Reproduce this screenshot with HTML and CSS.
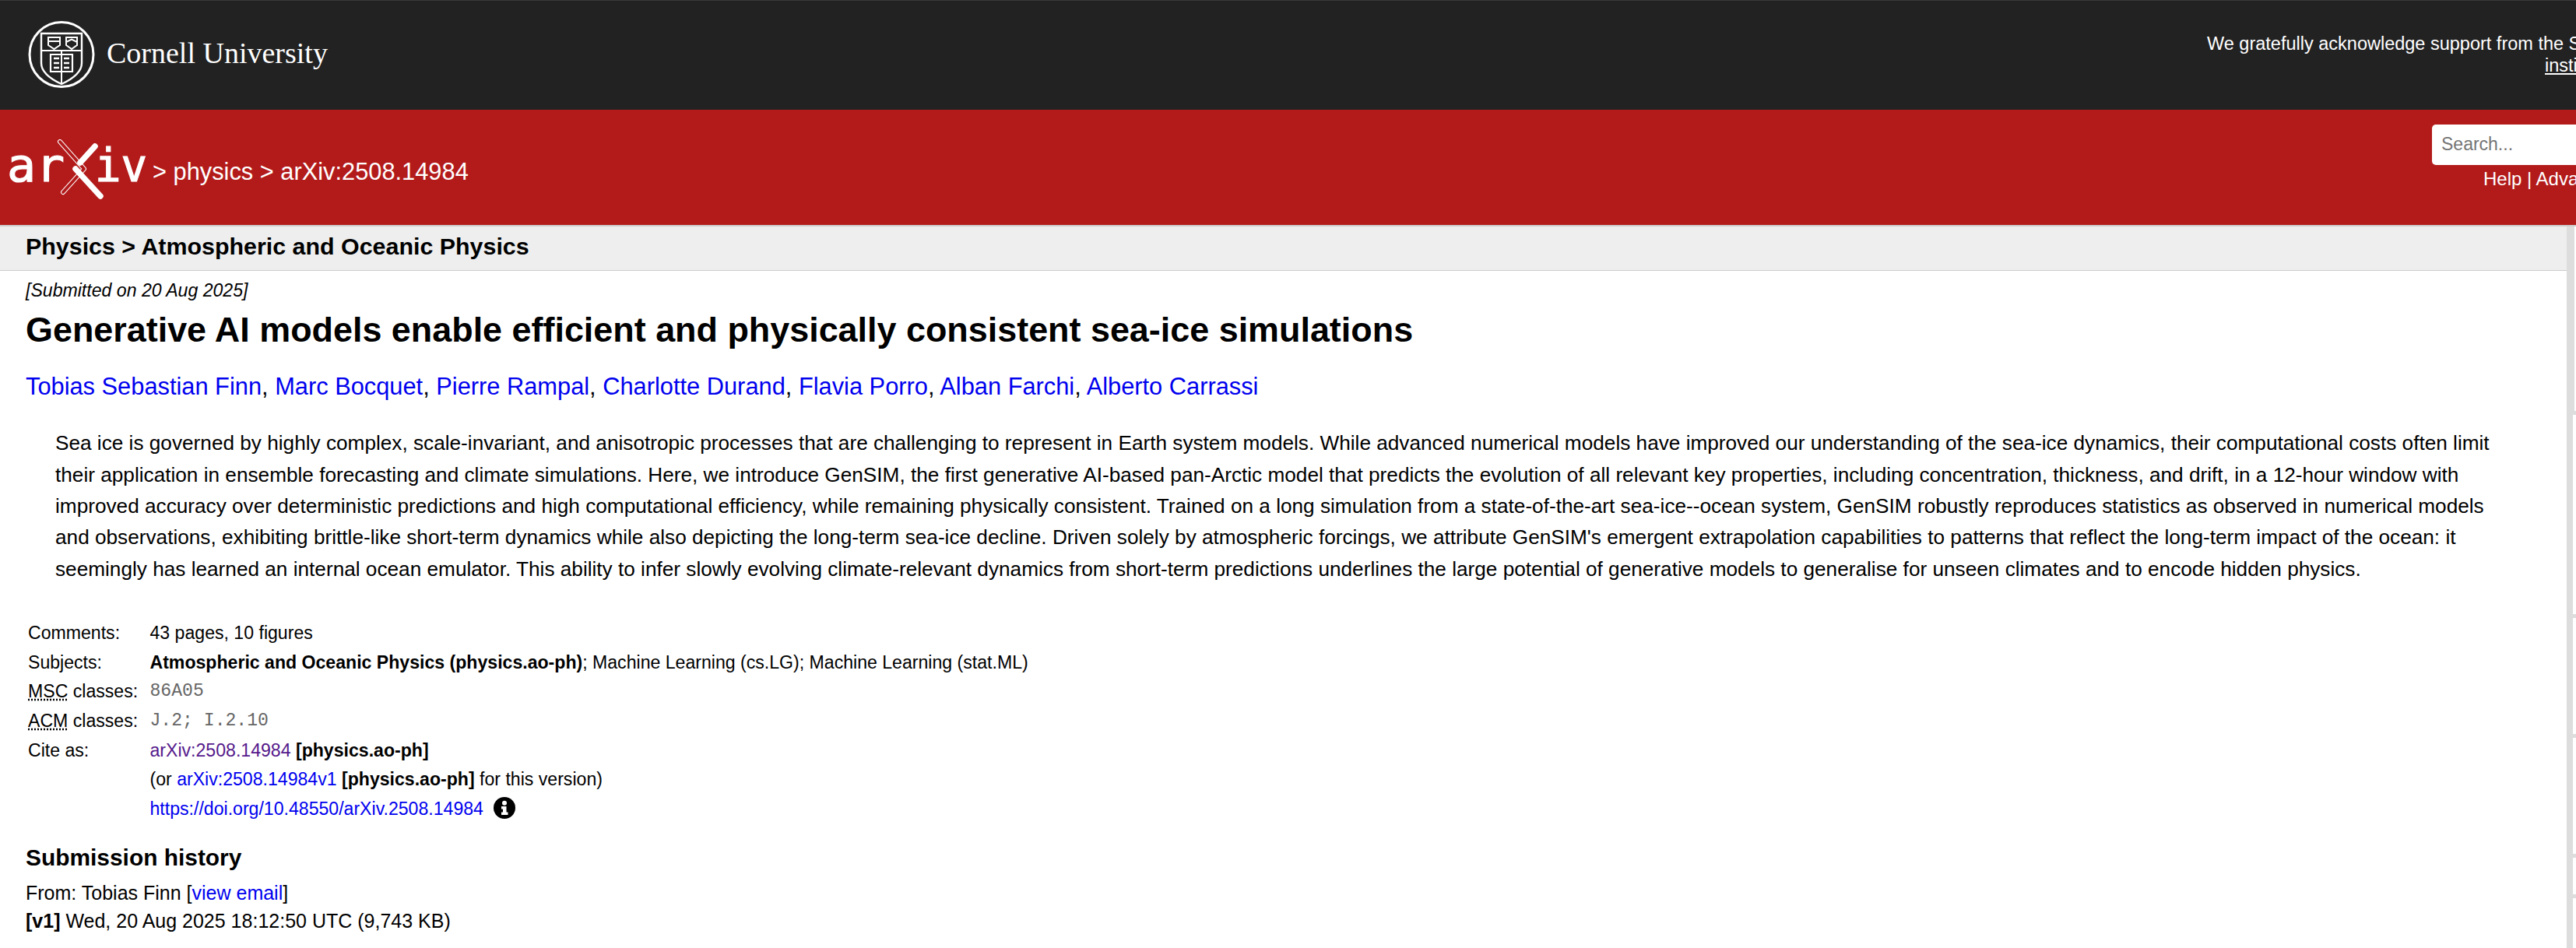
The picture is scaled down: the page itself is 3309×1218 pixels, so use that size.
FILE: index.html
```html
<!DOCTYPE html>
<html lang="en">
<head>
  <meta charset="UTF-8">
  <title>Generative AI models enable efficient and physically consistent sea-ice simulations</title>
  <link rel="stylesheet" href="styles.css">
</head>
<body>

<header class="cu-bar">
  <div class="cu-brand">
    <svg class="cu-seal" viewBox="0 0 86 86" width="86" height="86" fill="none" stroke="#fff">
      <ellipse cx="43" cy="43" rx="41" ry="41.5" stroke-width="3"/>
      <path d="M17 16H69V54C69 66 56 75 43 81C30 75 17 66 17 54Z" stroke-width="2.4"/>
      <path d="M17 38H69M43 38V81" stroke-width="2"/>
      <path d="M26 21H41V31L33.5 36L26 31ZM49 21H63V31L56 36L49 31ZM26 26H41M49 27L56 23.5L63 27" stroke-width="2"/>
      <path d="M29 43H57V65H29Z" stroke-width="2.2"/>
      <path d="M33 48H40M33 54H40M33 60H40M46 48H53M46 54H53M46 60H53" stroke-width="2.6"/>
    </svg>
    <span class="cu-name">Cornell University</span>
  </div>
  <div class="support">
    <div>We gratefully acknowledge support from the Simons Foundation, member</div>
    <div class="support-link"><a href="#">institutions</a>, and all contributors.</div>
  </div>
</header>

<div class="red-bar">
  <svg class="arxiv-logo" viewBox="0 0 187 78" width="187" height="78">
    <text class="logo-text" x="9" y="54" textLength="74" lengthAdjust="spacingAndGlyphs">ar</text>
    <text class="logo-text" x="122" y="54" textLength="67" lengthAdjust="spacingAndGlyphs">iv</text>
    <g fill="none" stroke-linecap="round">
      <path d="M77 3L108 38L81 68" stroke="#fff" stroke-width="6" stroke-linejoin="round"/>
      <path d="M77 3L108 38L81 68" stroke="#b31b1b" stroke-width="4" stroke-linejoin="round"/>
      <path d="M122 9L103 30" stroke="#fff" stroke-width="7.5"/>
      <path d="M97 38L129 73" stroke="#fff" stroke-width="7.5"/>
    </g>
  </svg>
  <div class="crumbs">&gt; physics &gt; arXiv:2508.14984</div>
  <div class="search-box">
    <input class="search-input" type="text" placeholder="Search...">
    <div class="search-help">Help | Advanced Search</div>
  </div>
</div>

<div class="body-row">
  <main class="content">
    <div class="subheader">Physics &gt; Atmospheric and Oceanic Physics</div>
    <div class="paper">
      <div class="dateline">[Submitted on 20 Aug 2025]</div>
      <h1 class="title">Generative AI models enable efficient and physically consistent sea-ice simulations</h1>
      <div class="authors"><a href="#">Tobias Sebastian Finn</a>, <a href="#">Marc Bocquet</a>, <a href="#">Pierre Rampal</a>, <a href="#">Charlotte Durand</a>, <a href="#">Flavia Porro</a>, <a href="#">Alban Farchi</a>, <a href="#">Alberto Carrassi</a></div>
      <blockquote class="abstract">Sea ice is governed by highly complex, scale-invariant, and anisotropic processes that are challenging to represent in Earth system models. While advanced numerical models have improved our understanding of the sea-ice dynamics, their computational costs often limit their application in ensemble forecasting and climate simulations. Here, we introduce GenSIM, the first generative AI-based pan-Arctic model that predicts the evolution of all relevant key properties, including concentration, thickness, and drift, in a 12-hour window with improved accuracy over deterministic predictions and high computational efficiency, while remaining physically consistent. Trained on a long simulation from a state-of-the-art sea-ice--ocean system, GenSIM robustly reproduces statistics as observed in numerical models and observations, exhibiting brittle-like short-term dynamics while also depicting the long-term sea-ice decline. Driven solely by atmospheric forcings, we attribute GenSIM's emergent extrapolation capabilities to patterns that reflect the long-term impact of the ocean: it seemingly has learned an internal ocean emulator. This ability to infer slowly evolving climate-relevant dynamics from short-term predictions underlines the large potential of generative models to generalise for unseen climates and to encode hidden physics.</blockquote>

      <div class="meta">
        <div class="meta-label">Comments:</div>
        <div>43 pages, 10 figures</div>
        <div class="meta-label">Subjects:</div>
        <div><b>Atmospheric and Oceanic Physics (physics.ao-ph)</b>; Machine Learning (cs.LG); Machine Learning (stat.ML)</div>
        <div class="meta-label"><abbr class="abbr">MSC</abbr> classes:</div>
        <div class="mono">86A05</div>
        <div class="meta-label"><abbr class="abbr">ACM</abbr> classes:</div>
        <div class="mono">J.2; I.2.10</div>
        <div class="meta-label">Cite as:</div>
        <div><a class="visited" href="#">arXiv:2508.14984</a> <b>[physics.ao-ph]</b></div>
        <div></div>
        <div>(or <a href="#">arXiv:2508.14984v1</a> <b>[physics.ao-ph]</b> for this version)</div>
        <div></div>
        <div class="doi-row"><a href="#">https://doi.org/10.48550/arXiv.2508.14984</a>
          <svg class="info-icon" viewBox="0 0 28 28" width="28" height="28">
            <circle cx="14" cy="14" r="14" fill="#000"/>
            <circle cx="14" cy="7.8" r="3" fill="#fff"/>
            <path d="M10 12H16.5V19.5H18.5V23H10V19.5H12V15.5H10Z" fill="#fff"/>
          </svg>
        </div>
      </div>

      <h2 class="history-title">Submission history</h2>
      <div class="history">
        From: Tobias Finn [<a href="#">view email</a>]<br>
        <b>[v1]</b> Wed, 20 Aug 2025 18:12:50 UTC (9,743 KB)
      </div>
    </div>
  </main>
  <aside class="side-strip">
    <div class="side-top"></div>
    <div class="side-notch notch-a"></div>
    <div class="side-notch notch-b"></div>
    <div class="side-notch notch-c"></div>
    <div class="side-notch notch-d"></div>
    <div class="side-notch notch-e"></div>
  </aside>
</div>

</body>
</html>
```

FILE: styles.css
```css
html, body {
  margin: 0;
  height: 1218px;
  overflow: hidden;
}
body {
  font-family: "Liberation Sans", Arial, sans-serif;
  font-size: 24px;
  color: #000;
  background: #fff;
}
a {
  color: #00e;
  text-decoration: none;
}

/* top black bar */
.cu-bar {
  display: flex;
  justify-content: space-between;
  height: 141px;
  box-sizing: border-box;
  border-top: 1px solid #3a3a3a;
  background: #222;
  color: #fff;
}
.cu-brand {
  display: flex;
  align-items: center;
  gap: 15px;
  padding: 0 0 2px 36px;
}
.cu-seal {
  display: block;
}
.cu-name {
  font-family: "Liberation Serif", serif;
  font-size: 38px;
  margin-top: -4px;
}
.support {
  width: 474px;
  flex-shrink: 0;
  padding-top: 41px;
  font-size: 23.5px;
  line-height: 28px;
  white-space: nowrap;
}
.support-link {
  padding-left: 434px;
}
.support-link a {
  color: #fff;
  text-decoration: underline;
}

/* red bar */
.red-bar {
  display: flex;
  height: 148px;
  background: #b31b1b;
  color: #fff;
}
.arxiv-logo {
  display: block;
  margin-top: 38px;
  flex-shrink: 0;
}
.logo-text {
  font-family: "DejaVu Sans Mono", monospace;
  font-size: 58px;
  fill: #fff;
  stroke: #fff;
  stroke-width: 1.2px;
}
.crumbs {
  margin: 62px 0 0 9px;
  font-size: 30.8px;
  line-height: 36px;
  white-space: nowrap;
}
.search-box {
  margin: 19px 0 0 auto;
  width: 185px;
  flex-shrink: 0;
  white-space: nowrap;
}
.search-input {
  display: block;
  box-sizing: border-box;
  width: 300px;
  height: 52px;
  padding: 0 12px 2px;
  border: 0;
  border-radius: 5px;
  font-family: "Liberation Sans", Arial, sans-serif;
  font-size: 23px;
  background: #fff;
}
.search-input::placeholder {
  color: #757575;
  opacity: 1;
}
.search-help {
  margin: 4px 0 0 66px;
  line-height: 28px;
}

/* main area */
.body-row {
  display: flex;
  border-top: 2px solid #ccc;
  height: 927px;
}
.content {
  flex: 1;
}
.subheader {
  height: 57px;
  box-sizing: border-box;
  padding-left: 33px;
  background: #eee;
  border-bottom: 1px solid #ccc;
  font-size: 30.4px;
  font-weight: 700;
  line-height: 50px;
}
.paper {
  padding: 0 60px 0 33px;
}
.dateline {
  margin-top: 12px;
  font-size: 23.1px;
  font-style: italic;
  line-height: 26px;
}
.title {
  margin: 13.4px 0 0;
  font-size: 44.9px;
  line-height: 50px;
}
.authors {
  margin-top: 28px;
  font-size: 30.8px;
  line-height: 40px;
}
.abstract {
  margin: 32px 0 0 38px;
  font-size: 26.2px;
  line-height: 40.3px;
}
.meta {
  display: grid;
  grid-template-columns: 156.5px 1fr;
  grid-auto-rows: 37.6px;
  margin: 44.4px 0 0 3px;
  font-size: 23.1px;
  line-height: 37.6px;
}
.abbr {
  text-decoration: underline dotted;
}
.mono {
  font-family: "Liberation Mono", monospace;
  color: #666;
}
.visited {
  color: #551a8b;
}
.doi-row {
  display: flex;
  align-items: flex-start;
  gap: 13px;
}
.info-icon {
  display: block;
  margin-top: 3px;
}
.history-title {
  margin: 25.2px 0 0;
  font-size: 29.9px;
  line-height: 36px;
}
.history {
  margin-top: 9.7px;
  font-size: 25px;
  line-height: 36px;
}

/* thin strip at the right edge */
.side-strip {
  position: relative;
  width: 12px;
  flex-shrink: 0;
}
.side-strip::before {
  content: "";
  display: block;
  width: 8px;
  height: 100%;
  background: #ddd;
}
.side-top {
  position: absolute;
  top: 0;
  left: 8px;
  width: 2px;
  height: 237px;
  background: #ddd;
}
.side-notch {
  position: absolute;
  left: 8px;
  width: 4px;
  height: 5px;
  background: #ddd;
}
.notch-a { top: 237px; }
.notch-b { top: 498px; }
.notch-c { top: 652px; }
.notch-d { top: 806px; }
.notch-e { top: 858px; }
```
